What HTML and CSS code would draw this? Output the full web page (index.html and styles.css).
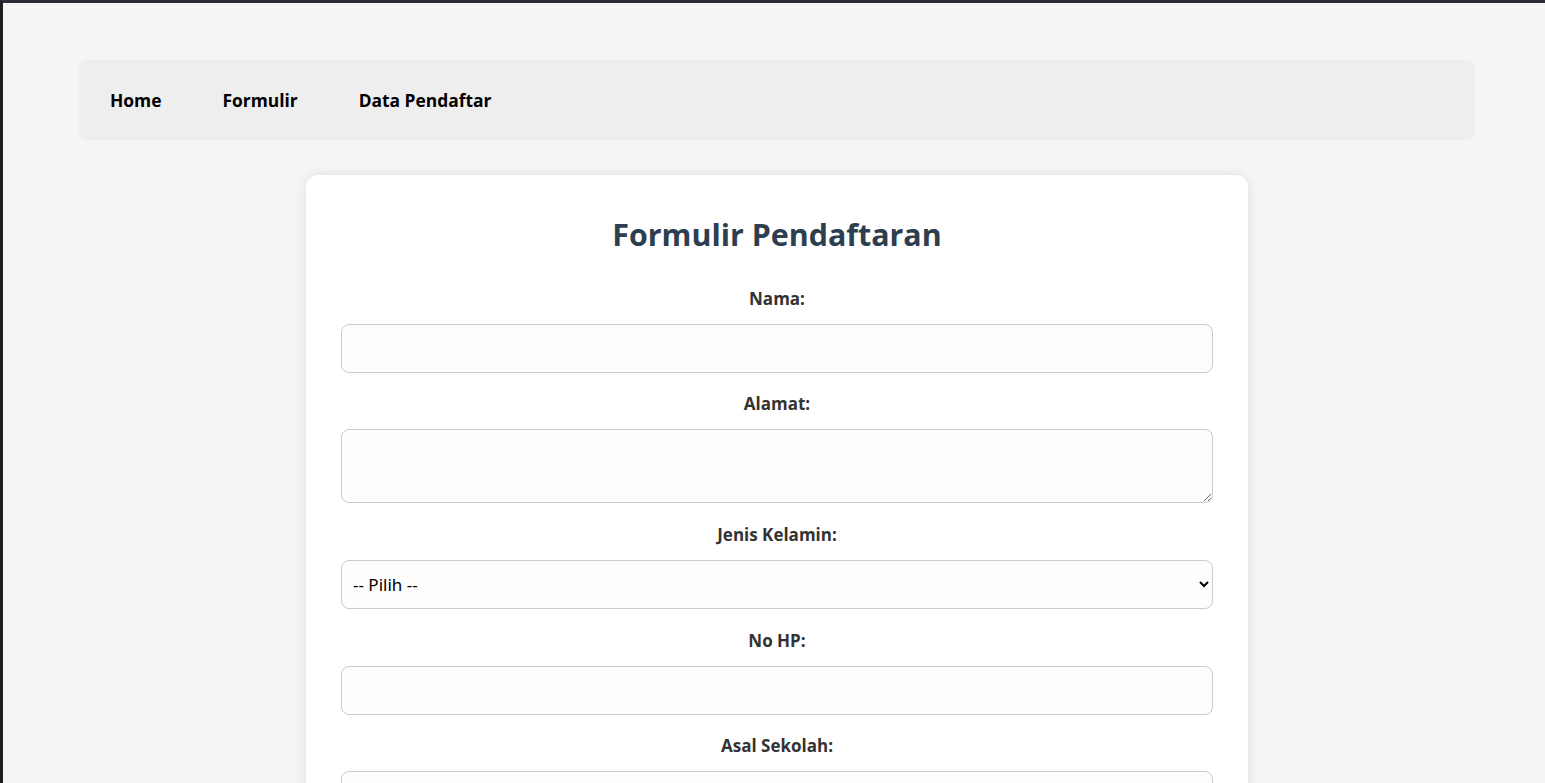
FILE: index.html
```html
<!DOCTYPE html>
<html lang="id">
<head>
    <meta charset="UTF-8">
    <meta name="viewport" content="width=device-width, initial-scale=1.0">
    <title>Formulir Pendaftaran</title>
    <link rel="stylesheet" href="styles.css">
</head>
<body>
    <div class="page">
        <nav class="navbar">
            <a href="#">Home</a>
            <a href="#">Formulir</a>
            <a href="#">Data Pendaftar</a>
        </nav>

        <div class="form-card">
            <h2>Formulir Pendaftaran</h2>
            <form>
                <label for="nama">Nama:</label>
                <input type="text" id="nama" name="nama">

                <label for="alamat">Alamat:</label>
                <textarea id="alamat" name="alamat"></textarea>

                <label for="jk">Jenis Kelamin:</label>
                <select id="jk" name="jk">
                    <option value="">-- Pilih --</option>
                    <option value="L">Laki-laki</option>
                    <option value="P">Perempuan</option>
                </select>

                <label for="hp">No HP:</label>
                <input type="text" id="hp" name="hp">

                <label for="sekolah">Asal Sekolah:</label>
                <input type="text" id="sekolah" name="sekolah">

                <button type="submit">Daftar</button>
            </form>
        </div>
    </div>
</body>
</html>
```

FILE: styles.css
```css
body {
    margin: 0;
    font-family: "Open Sans", "Noto Sans", sans-serif;
    background-color: #f4f5f7;
    border-top: 3px solid #2c2c38;
    border-left: 3px solid #1e1e1e;
    min-height: 100vh;
    box-sizing: border-box;
}
.page {
    padding: 57px 70px 40px 76px;
}
.navbar {
    background: #eeeeee;
    border-radius: 8px;
    height: 80px;
    display: flex;
    align-items: center;
    gap: 61px;
    padding-left: 31px;
}
.navbar a {
    color: #000;
    text-decoration: none;
    font-weight: bold;
    font-size: 17.4px;
}
.form-card {
    background: white;
    max-width: 872px;
    margin: 35px auto 0;
    padding: 39px 35px 35px;
    border-radius: 12px;
    box-shadow: 0 0 12px rgba(0,0,0,0.09);
}
.form-card h2 {
    text-align: center;
    color: #2c3e50;
    font-size: 30.4px;
    margin: 0 0 32px;
}
form label {
    display: block;
    text-align: center;
    font-weight: bold;
    font-size: 17px;
    line-height: 24px;
    color: #333;
    margin-bottom: 13px;
}
form input,
form textarea,
form select {
    display: block;
    width: 100%;
    box-sizing: border-box;
    height: 49px;
    padding: 10px 11px;
    border: 1px solid #ccc;
    border-radius: 8px;
    background: #fdfdfd;
    font-family: "Noto Sans", sans-serif;
    font-size: 16px;
    color: #000;
    margin-bottom: 19px;
}
form textarea {
    height: 74px;
    margin-bottom: 20px;
}
form select {
    padding-left: 7px;
    font-size: 17px;
    margin-bottom: 20px;
}
form button {
    display: block;
    width: 100%;
    padding: 12px;
    border: none;
    border-radius: 8px;
    background: #2c3e50;
    color: white;
    font-weight: bold;
    font-size: 16px;
}
```
